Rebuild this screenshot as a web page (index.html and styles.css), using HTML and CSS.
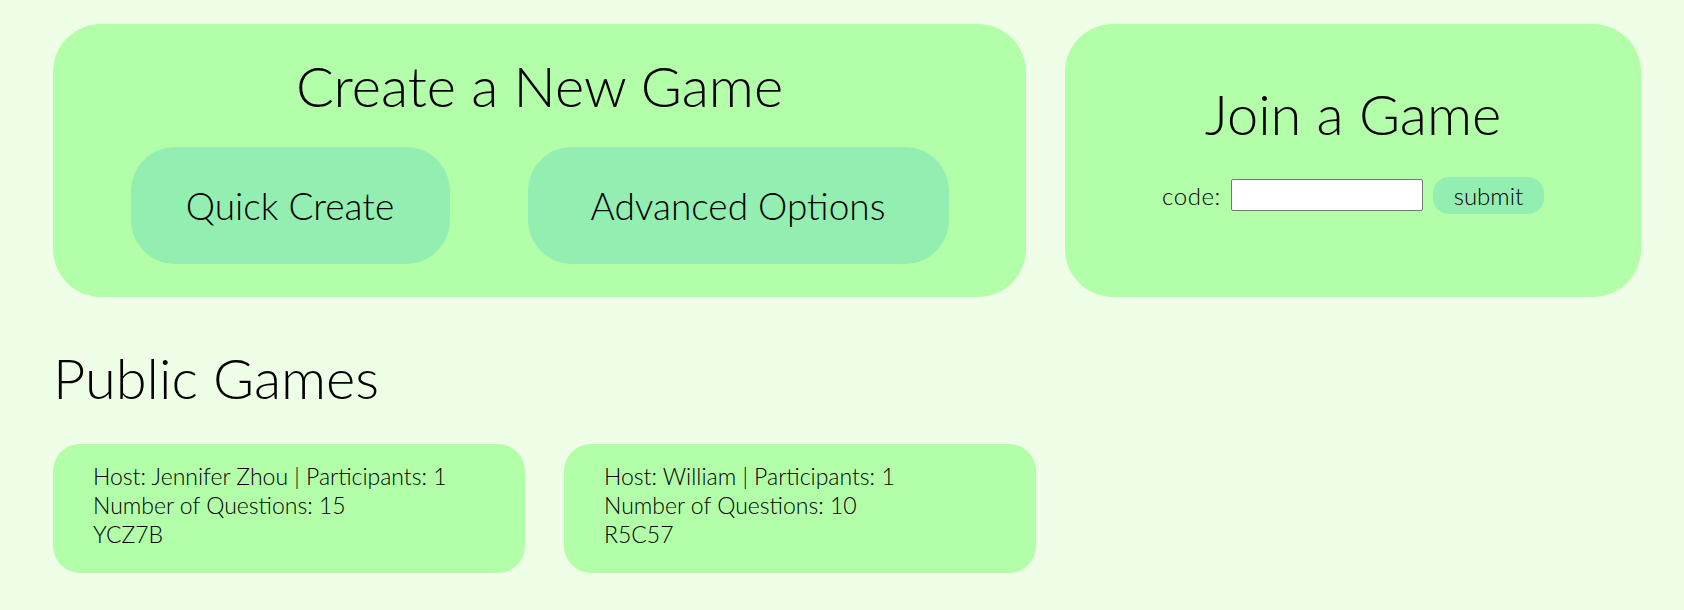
FILE: index.html
```html
<!DOCTYPE html>
<html lang="en">
<head>
<meta charset="utf-8">
<title>Games</title>
<link rel="stylesheet" href="styles.css">
</head>
<body>
<main class="page">
  <section class="top">
    <div class="card create">
      <h1 class="title">Create a New Game</h1>
      <div class="create-buttons">
        <button class="big-btn quick">Quick Create</button>
        <button class="big-btn advanced">Advanced Options</button>
      </div>
    </div>
    <div class="card join">
      <h1 class="title">Join a Game</h1>
      <form class="join-row">
        <label class="code-label" for="code">code:</label>
        <input class="code-input" id="code" type="text">
        <button type="button" class="submit-btn">submit</button>
      </form>
    </div>
  </section>
  <h1 class="title public-title">Public Games</h1>
  <section class="games">
    <div class="game-card">
      <div>Host: Jennifer Zhou | Participants: 1</div>
      <div>Number of Questions: 15</div>
      <div>YCZ7B</div>
    </div>
    <div class="game-card">
      <div>Host: William | Participants: 1</div>
      <div>Number of Questions: 10</div>
      <div>R5C57</div>
    </div>
  </section>
</main>
</body>
</html>
```
FILE: styles.css
```css
html, body {
  margin: 0;
  padding: 0;
  background: #effee6;
}
body {
  font-family: "Lato", "Liberation Sans", sans-serif;
  font-weight: 300;
  color: #000;
}
.page {
  padding: 24px 44px 0 53px;
}
.top {
  display: grid;
  grid-template-columns: 973px 576px;
  gap: 39px;
}
.card {
  background: #b3fea8;
  border-radius: 48px;
  height: 273px;
  box-sizing: border-box;
  display: flex;
  flex-direction: column;
  align-items: center;
}
.title {
  margin: 0;
  font-size: 56px;
  font-weight: 300;
  line-height: 1.2;
}
.create {
  padding-top: 28px;
}
.create-buttons {
  display: flex;
  gap: 78px;
  margin-top: 28px;
}
.big-btn {
  font-family: inherit;
  font-weight: 300;
  font-size: 37px;
  color: #000;
  background: #93eeb2;
  border: none;
  border-radius: 44px;
  height: 117px;
  padding: 0 50px;
}
.quick { width: 319px; }
.advanced { width: 421px; }
.join {
  justify-content: center;
  padding-bottom: 27px;
}
.join-row {
  display: flex;
  align-items: center;
  margin-top: 29px;
  font-size: 24px;
}
.code-label {
  margin-right: 10px;
  letter-spacing: 0.6px;
}
.code-input {
  width: 192px;
  height: 32px;
  box-sizing: border-box;
  border: 1px solid #767676;
  border-radius: 2px;
  background: #fff;
  padding: 0 4px;
}
.submit-btn {
  font-family: inherit;
  font-weight: 300;
  font-size: 24px;
  color: #000;
  background: #93eeb2;
  border: none;
  border-radius: 16px;
  width: 111px;
  height: 37px;
  margin-left: 10px;
  padding: 0;
}
.public-title {
  margin-top: 47px;
}
.games {
  display: flex;
  gap: 39px;
  margin-top: 33px;
}
.game-card {
  width: 472px;
  height: 129px;
  box-sizing: border-box;
  background: #b3fea8;
  border-radius: 27px;
  padding: 18px 40px;
  font-size: 23px;
  line-height: 29px;
}
```
